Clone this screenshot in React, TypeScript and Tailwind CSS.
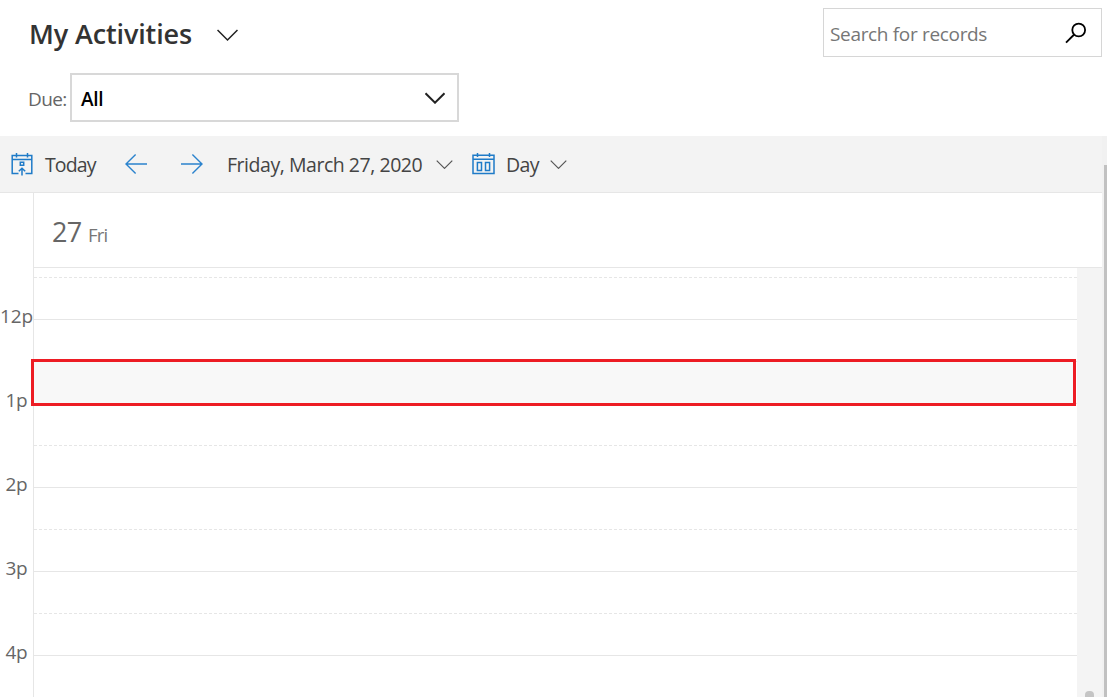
import React from "react";

type IconProps = { className?: string };

function Chevron({ className }: IconProps) {
  return (
    <svg viewBox="0 0 20 11" fill="none" stroke="currentColor" className={className}>
      <path d="M0.5 0.8 10 10.2 19.5 0.8" vectorEffect="non-scaling-stroke" />
    </svg>
  );
}

function SearchIcon() {
  return (
    <svg width="22" height="22" viewBox="0 0 22 22" fill="none" stroke="#000" strokeWidth="1.8" className="shrink-0">
      <circle cx="13.7" cy="8" r="6.4" />
      <path d="M9.2 12.5 1 20.6" />
    </svg>
  );
}

function TodayIcon() {
  return (
    <svg width="22" height="23" viewBox="0 0 22 23" fill="none" stroke="#1f7bc8" strokeWidth="1.5" className="shrink-0">
      <path d="M7.5 20.5H1.2V2.5h19.6v18h-6.3M1 6.5h20M5.5 0v4.5M16.5 0v4.5" />
      <path d="M9.3 9.2h3.4v3H9.3zM11 22.5v-7.3M7.8 18.3 11 15.2l3.2 3.1" />
    </svg>
  );
}

function DayIcon() {
  return (
    <svg width="23" height="22" viewBox="0 0 23 22" fill="none" stroke="#1f7bc8" strokeWidth="1.5" className="shrink-0">
      <path d="M1 2.3h21v18.2H1zM1 6.3h21M5.5 0v4M17.5 0v4" />
      <path d="M5.4 9.4h4.1v8.2H5.4zM13.5 9.4h4.1v8.2h-4.1z" />
    </svg>
  );
}

function Arrow({ className }: IconProps) {
  return (
    <svg width="22" height="20" viewBox="0 0 22 20" fill="none" stroke="#2b83cd" strokeWidth="1.4" className={className}>
      <path d="M22 10H1M10.6 0.5 1 10l9.6 9.5" />
    </svg>
  );
}

const hours = ["12p", "1p", "2p", "3p", "4p"];

export default function App() {
  return (
    <div className="relative flex h-[697px] w-[1107px] flex-col overflow-hidden bg-white font-['Open_Sans','Noto_Sans',sans-serif] whitespace-nowrap">
      <header className="flex h-[136px] shrink-0 justify-between pr-[5px]">
        <div className="pl-[28px]">
          <div className="flex h-[69px] items-center pl-[1px]">
            <h1 className="w-[188px] text-[27px] font-semibold tracking-[-0.13px] text-[#333]">My Activities</h1>
            <Chevron className="h-[12px] w-[21px] stroke-[1.5px] text-[#222]" />
          </div>
          <div className="mt-[4px] flex h-[49px] items-center">
            <span className="w-[42px] pt-[4px] text-[19px] tracking-[-0.6px] text-[#666]">Due:</span>
            <div className="flex h-[49px] w-[389px] items-center justify-between border-2 border-[#d8d8d8] pr-[12px] pl-[9px]">
              <span className="pt-[4px] text-[19px] font-semibold tracking-[-0.3px] text-black">All</span>
              <Chevron className="h-[12px] w-[20px] stroke-[2px] text-[#222]" />
            </div>
          </div>
        </div>
        <div className="mt-[8px] flex h-[49px] w-[279px] items-center justify-between border border-[#d6d6d6] pr-[14px] pl-[6px]">
          <span className="pt-[4px] text-[19px] tracking-[-0.33px] text-[#767676]">Search for records</span>
          <SearchIcon />
        </div>
      </header>

      <div className="flex min-h-0 flex-1">
        <main className="flex w-[1102px] flex-col">
          <nav className="flex h-[57px] shrink-0 items-center border-b border-[#e6e6e6] bg-[#f3f3f3] pl-[11px] text-[19.5px] text-[#444]">
            <TodayIcon />
            <span className="ml-[12px] w-[80px] pt-[2px] tracking-[-0.9px]">Today</span>
            <Arrow className="shrink-0" />
            <Arrow className="ml-[34px] shrink-0 rotate-180" />
            <span className="ml-[24px] w-[209px] pt-[2px] tracking-[-0.46px]">Friday, March 27, 2020</span>
            <Chevron className="h-[9px] w-[17px] shrink-0 stroke-[1.2px] text-[#555]" />
            <span className="ml-[19px]"><DayIcon /></span>
            <span className="ml-[11px] w-[44px] pt-[2px] tracking-[-0.6px]">Day</span>
            <Chevron className="h-[9px] w-[17px] shrink-0 stroke-[1.2px] text-[#555]" />
          </nav>

          <section className="flex h-[75px] shrink-0">
            <div className="w-[34px] shrink-0 border-r border-[#e6e6e6]" />
            <div className="flex flex-1 items-baseline border-b border-[#e6e6e6] pt-[20px] pl-[18px]">
              <span className="w-[36px] text-[27px] leading-[38px] tracking-[-0.8px] text-[#666]">27</span>
              <span className="text-[18.5px] tracking-[-0.8px] text-[#767676]">Fri</span>
            </div>
          </section>

          <section className="flex min-h-0 flex-1">
            <div className="flex w-[34px] shrink-0 flex-col border-r border-[#e6e6e6] pt-[6px]">
              {hours.map((hour) => (
                <div key={hour} className="flex h-[84px] shrink-0 items-center justify-center text-[19px] tracking-[-0.2px] text-[#666]">
                  <span>{hour}</span>
                </div>
              ))}
            </div>
            <div className="flex w-[1043px] shrink-0 flex-col overflow-hidden pt-[9px]">
              {hours.map((hour) => (
                <div key={hour} className="h-[84px] shrink-0">
                  <svg width="1043" height="1" className="block">
                    <path d="M0 0.5H1043" stroke="#e6e6e6" strokeDasharray="3 2" />
                  </svg>
                  <div className="h-[42px] border-b border-[#e6e6e6]" />
                </div>
              ))}
            </div>
            <div className="flex w-[25px] flex-col justify-end bg-[#f4f4f4] pl-[8px]">
              <div className="h-[6px] w-[9px] rounded-t-[4px] bg-[#c5c5c5]" />
            </div>
          </section>
        </main>
        <div className="w-[5px] bg-[#f1f1f1] pt-[29px] pl-[2px]">
          <div className="h-full bg-[#c1c1c1]" />
        </div>
      </div>

      <div className="absolute top-[359px] left-[31px] h-[47px] w-[1045px] border-[3px] border-[#ed1c24] bg-[#f8f8f8]" />
    </div>
  );
}
